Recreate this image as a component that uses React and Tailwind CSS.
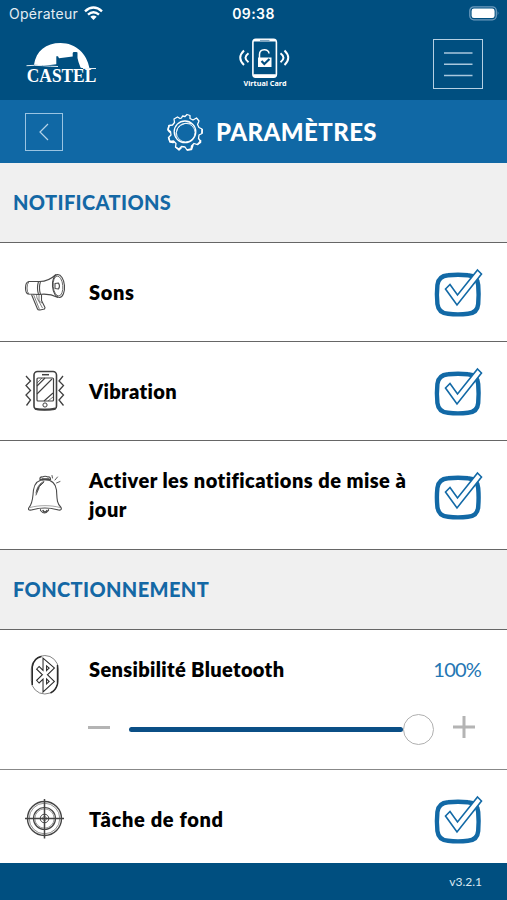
import { useState } from "react";

/* ---------- Icons ---------- */

function CastelLogo() {
  return (
    <svg width="74" height="50" viewBox="0 0 74 50" fill="white" className="overflow-visible">
      <path d="M8 22.800C10 9 20 1 34.500 1C50 1 61 12 63.500 26.300C60 26.500 57 26.500 54.500 25.500L52.500 20L51.500 16V10.500L50.500 10H47.500L46.700 11V14.500L33 16.300L32 14.300H30.300V22.300C23 23.500 16 23.500 8 22.800Z" />
      <path d="M0.500 23.700C11 22.500 22 24.500 32 24.500" stroke="white" strokeWidth="0.900" fill="none" />
      <path d="M57 26.500H70" stroke="white" strokeWidth="0.900" />
      <text
        x="0.800"
        y="40"
        textLength="69.500"
        lengthAdjust="spacingAndGlyphs"
        fontFamily="'Liberation Serif', serif"
        fontWeight="700"
        fontSize="18"
      >
        CASTEL
      </text>
    </svg>
  );
}

function CardLogo() {
  return (
    <svg width="54" height="52" viewBox="0 0 54 52" fill="none" stroke="white">
      <rect x="15.900" y="1.300" width="23.500" height="38" rx="3" strokeWidth="1.600" />
      <path d="M17 2.500H38.500" strokeWidth="2" />
      <path d="M23 2.600H32.500" stroke="#7da5c1" strokeWidth="1.400" />
      <path d="M16.500 37.700H38.800" strokeWidth="3" />
      <path d="M22.500 20V16.500C22.500 10.300 32 10.300 32 15.500" strokeWidth="1.500" />
      <rect x="21" y="19.500" width="13.500" height="9.500" fill="white" stroke="none" />
      <path d="M24.500 23L27.300 26L32.500 21" stroke="#004f80" strokeWidth="2.200" />
      <path d="M7 12.500Q-0.500 19.800 7 27M11.500 15.300Q5.500 19.800 11.500 24.300" strokeWidth="2" />
      <path d="M47.500 12.500Q55 19.800 47.500 27M43.500 15.300Q49.500 19.800 43.500 24.300" strokeWidth="2" />
      <text
        x="6.500"
        y="48"
        textLength="43"
        lengthAdjust="spacingAndGlyphs"
        fill="white"
        stroke="none"
        fontFamily="'Noto Sans', sans-serif"
        fontWeight="700"
        fontSize="7"
      >
        Virtual Card
      </text>
    </svg>
  );
}

function WifiIcon() {
  return (
    <svg width="19" height="15" viewBox="0 0 19 15" fill="none" stroke="white" strokeWidth="2.400">
      <path d="M1 5.300Q9.500 -2.300 18 5.300" />
      <path d="M4 8.700Q9.500 3.700 15 8.700" />
      <path d="M6.300 10.800Q9.500 8.300 12.700 10.800L9.500 14Z" fill="white" stroke="none" />
    </svg>
  );
}

function BatteryIcon() {
  return (
    <svg width="31" height="15" viewBox="0 0 31 15">
      <rect x="0.800" y="0.800" width="26.500" height="13" rx="4" fill="none" stroke="#6d9bbd" strokeWidth="1.300" />
      <rect x="2.600" y="2.600" width="23" height="9.400" rx="2.300" fill="white" />
      <path d="M28.700 5V9.500Q30.500 7.300 28.700 5Z" fill="#6d9bbd" />
    </svg>
  );
}

function GearIcon() {
  return (
    <svg width="36" height="38" viewBox="0 0 36 38" fill="none" stroke="white" strokeWidth="1.300" strokeLinejoin="round">
      <path d="M14.500 5L15.500 3L18 3.500L20 1.500L23 2.500L23 5.500L26 7L29.500 5L32 8L30.500 11.500L32 14.500L35 16L35 20.500L32 22L31.500 25.500L33.500 28L30.500 31.500L27 30.500L24.500 33L24 36L20 37L18 34L14.500 33.500L12 36L8.500 34L9 30.500L6.500 28L3 28.500L1.500 24.500L4 22L3.500 18.500L1 16.500L2 12.500L5.500 12L7.500 9.500L7 6L10.500 4L13 5.500Z" />
      <path d="M2 12.500L1 17L3 19.500M1.500 24.500L3 29L6 29.500L7.500 29M8.500 34L12 37L14.500 34.500M20 37L24.500 36.500L26 32M30.500 31.500L33.500 29.500V27M35 20.500L35.300 16" strokeWidth="1.500" />
      <circle cx="18" cy="18.800" r="10.800" strokeWidth="1.300" />
      <circle cx="18.700" cy="19.600" r="9.300" strokeWidth="0.800" />
      <path d="M9 25Q8 13 18 10.500Q25 9 28 14" strokeWidth="0.900" />
    </svg>
  );
}

function MegaphoneIcon() {
  return (
    <svg width="42" height="40" viewBox="0 0 42 40" fill="none" stroke="#4a4a4a" strokeWidth="1.100" strokeLinejoin="round">
      <path d="M15 9.500H5Q1.500 10 1.500 16Q1.500 21 4 22L15 22.500" />
      <path d="M5 9.500Q3 12 3 16T5 22.300" strokeWidth="0.800" />
      <path d="M14.500 9.500Q12.500 16 14.500 22.500M16.500 9.300Q14.500 16 16.500 22.500" />
      <path d="M14.500 9.500Q24 10 32 2.500M15 22.500Q25 21 34 25.500" />
      <ellipse cx="34.500" cy="14" rx="6" ry="11.600" transform="rotate(-5 34.500 14)" />
      <ellipse cx="34" cy="14" rx="4.800" ry="10" transform="rotate(-5 34 14)" strokeWidth="0.800" />
      <path d="M31 11.500L34.500 11Q36.500 14 34.500 17L31 16.500Z" />
      <path d="M7.500 22.500L13.500 37Q14 38.300 16 38L20.500 37L21 35.500L17.500 28.500V23" />
      <path d="M9.500 22.500L15.500 37.500M12.500 22.500L13 26L18.500 36M15 23V29L18 31" strokeWidth="0.700" />
    </svg>
  );
}

function VibrationIcon() {
  return (
    <svg width="42" height="42" viewBox="0 0 42 42" fill="none" stroke="#404040">
      <rect x="10" y="1.500" width="22.500" height="38" rx="3.500" strokeWidth="1.600" />
      <path d="M11 38.800Q21 41 31.500 38.500" strokeWidth="2" />
      <rect x="13" y="8" width="16.500" height="23" rx="1" strokeWidth="1.200" />
      <path d="M18 4.700H25" strokeWidth="1.500" />
      <circle cx="21" cy="35" r="2.100" strokeWidth="1" />
      <path d="M13 16L21 8M13 24L28 9M20 31L29 23" strokeWidth="1.100" />
      <path d="M13 13L18 8M24 31L29 27" strokeWidth="0.700" />
      <path d="M2 6L6.500 11L2 15.500L6.500 20.500L2 25L6.500 30L2.500 35.500" strokeWidth="1.300" />
      <path d="M39 6L35 11L39.500 15.500L35 20.500L39.500 25L35 30L39.500 35.500" strokeWidth="1.300" />
    </svg>
  );
}

function BellIcon() {
  return (
    <svg width="42" height="42" viewBox="0 0 42 42" fill="none" stroke="#4a4a4a" strokeWidth="1.100" strokeLinecap="round">
      <path d="M5 33.500C9 29 8.500 24 9.500 16C10.500 9 15 5.500 21 5.500C27.500 5.500 32 10 32.500 16C33 24 32.500 29 37 33.500C38 35.500 36.500 36.500 34.500 36C25.500 33.500 16 33.500 7.500 36C4.500 36.500 3.800 35.500 5 33.500Z" />
      <path d="M6 33.500C15 31 27 31 36 33.500" strokeWidth="0.500" />
      <path d="M16 5.500Q15.500 2.700 18.500 3Q21 1.500 24 3Q26.500 2.500 26.500 5.500Z" strokeWidth="1.200" />
      <path d="M18 4.500H25M18 6H25" strokeWidth="0.800" />
      <path d="M16.500 35.500V36.500Q20.500 41.500 24.500 36.500V35.500" />
      <path d="M19 36.500Q21 39.500 23 36.500" strokeWidth="1.500" />
      <path d="M12 19Q13 11 19.500 7.500M13 17Q14 12 19 9M14 15L17 9.500M12 21L15 14M16 12L20 8" strokeWidth="0.900" />
      <path d="M28.500 4L28 1.500M31 6L33.500 3M32.500 9L36 7.500" strokeWidth="0.900" />
    </svg>
  );
}

function BluetoothIcon() {
  return (
    <svg width="42" height="42" viewBox="0 0 42 42" fill="none" stroke="#2a2a2a">
      <rect x="7.300" y="1.500" width="27" height="38.500" rx="13.500" stroke="#777" strokeWidth="0.900" />
      <path d="M8.300 31V13Q9.500 4 17.500 2.500M33.500 11V30Q31.500 37 26.500 39" strokeWidth="1.400" />
      {/* Hollow rune: dark stroke with a thinner white one on top */}
      <path d="M13.500 13.500L27.800 27.500L20.800 34V8L27.800 14L13.500 28" strokeWidth="4.600" />
      <path d="M14.200 14.200L27.800 27.500L20.800 34V8L27.800 14L14.200 27.300" stroke="white" strokeWidth="2.500" />
    </svg>
  );
}

function TargetIcon() {
  return (
    <svg width="42" height="42" viewBox="0 0 42 42" fill="none" stroke="#444" strokeWidth="1">
      <circle cx="20.500" cy="20.500" r="17" strokeWidth="1.400" />
      <circle cx="20.500" cy="20.500" r="15.300" strokeWidth="0.600" />
      <circle cx="20.500" cy="20.500" r="11" strokeWidth="1.200" />
      <circle cx="20.500" cy="20.500" r="9.600" strokeWidth="0.500" />
      <circle cx="20.500" cy="20.500" r="4.300" />
      <circle cx="20.500" cy="20.500" r="2" strokeWidth="0.700" />
      <path d="M20.500 1V40.500M1 20.500H40" strokeWidth="1.500" />
    </svg>
  );
}

/* ---------- Building blocks ---------- */

function CheckBox({ checked, onChange }) {
  return (
    <button onClick={() => onChange(!checked)} className="shrink-0">
      <svg width="54" height="54" viewBox="0 0 54 54" fill="none" stroke="#1269a6">
        <path
          d="M18 10.300Q28 9.300 38 10.300Q47.500 11 48.200 20Q49 29.500 48.200 39Q47.500 48 38 48.800Q28 49.900 18 48.800Q8.500 48 7.400 39Q6.400 29.500 7.400 20Q8.500 11 18 10.300Z"
          strokeWidth="4.400"
        />
        {checked && (
          <path
            d="M47.500 5L51.500 9L27 40L15.500 24L20 19.500L27.500 30Z"
            fill="white"
            strokeWidth="1.600"
          />
        )}
      </svg>
    </button>
  );
}

function SectionTitle({ children }) {
  return (
    <div className="h-20 bg-[#f0f0f0] border-b border-[#666] flex items-center pl-[13px] pb-0.5">
      <h2 className="text-[20px] tracking-[0.37px] font-black text-[#1468a5]">{children}</h2>
    </div>
  );
}

function SettingRow({ icon, label, checked, onChange, className, labelClass }) {
  return (
    <div className={`flex items-center border-b border-[#666] pl-6 pr-[23px] ${className}`}>
      {icon}
      <p className={`flex-1 ml-[23px] text-[20px] leading-[29px] font-extrabold ${labelClass}`}>
        {label}
      </p>
      <CheckBox checked={checked} onChange={onChange} />
    </div>
  );
}

function App() {
  const [sounds, setSounds] = useState(true);
  const [vibration, setVibration] = useState(true);
  const [updates, setUpdates] = useState(true);
  const [background, setBackground] = useState(true);
  const [level, setLevel] = useState(100);

  return (
    <div className="w-[507px] h-[900px] overflow-hidden flex flex-col bg-white text-black font-['Lato',sans-serif] [font-variant-ligatures:none]">

      {/* Status bar */}
      <div className="h-[27px] shrink-0 bg-[#004f80] text-white grid grid-cols-3 items-center font-['Inter',sans-serif]">
        <div className="flex items-center gap-1.5 pl-[9px]">
          <span className="text-[14px] leading-none tracking-[0.25px] text-[#e4edf3]">Opérateur</span>
          <WifiIcon />
        </div>
        <span className="text-center text-[14px] leading-none font-semibold tracking-[0.4px]">09:38</span>
        <div className="flex justify-end pr-[7px]">
          <BatteryIcon />
        </div>
      </div>

      {/* Header */}
      <header className="h-[73px] shrink-0 bg-[#004f80] flex pl-[26px]">
        <div className="pt-[15px] w-[74px]">
          <CastelLogo />
        </div>
        <div className="pt-[11px] ml-[137px]">
          <CardLogo />
        </div>
        <button className="ml-[142px] mt-3 w-[50px] h-[50px] border border-[#b5d0e3] flex items-center justify-center">
          <svg width="30" height="26" viewBox="0 0 30 26" stroke="#a9c8dd" strokeWidth="1.500">
            <path d="M1 2H29.500M1 13.200H29.500M1 24.500H29.500" />
          </svg>
        </button>
      </header>

      {/* Page title */}
      <div className="h-[63px] shrink-0 bg-[#1068a5] flex items-center pl-[25px]">
        <button className="w-[38px] h-[38px] border border-[#9ac4e2] flex items-center justify-center">
          <svg width="12" height="18" viewBox="0 0 12 18" fill="none" stroke="#b5d3e8" strokeWidth="1.200">
            <path d="M10 1L2 9L10 17" />
          </svg>
        </button>
        <div className="ml-[104px]">
          <GearIcon />
        </div>
        <h1 className="ml-[13px] text-[24px] leading-none tracking-[0.42px] font-black text-white">PARAMÈTRES</h1>
      </div>

      <main className="flex-1 min-h-0 overflow-hidden">

        {/* Notifications */}
        <SectionTitle>NOTIFICATIONS</SectionTitle>
        <SettingRow
          icon={<MegaphoneIcon />}
          label="Sons"
          checked={sounds}
          onChange={setSounds}
          className="h-[99px]"
          labelClass="tracking-[0.6px]"
        />
        <SettingRow
          icon={<VibrationIcon />}
          label="Vibration"
          checked={vibration}
          onChange={setVibration}
          className="h-[99px]"
          labelClass="tracking-[0.35px]"
        />
        <SettingRow
          icon={<BellIcon />}
          label="Activer les notifications de mise à jour"
          checked={updates}
          onChange={setUpdates}
          className="h-[109px]"
          labelClass="tracking-[0.46px]"
        />

        {/* Operation */}
        <SectionTitle>FONCTIONNEMENT</SectionTitle>
        <div className="h-[140px] border-b border-[#888] pl-6 pr-[26px] pt-6">
          <div className="flex items-start">
            <BluetoothIcon />
            <p className="flex-1 ml-[23px] mt-px text-[20px] leading-[29px] tracking-[0.35px] font-extrabold">
              Sensibilité Bluetooth
            </p>
            <span className="mt-px text-[20px] leading-[29px] tracking-[-0.8px] text-[#2476b4]">{level}%</span>
          </div>
          <div className="flex items-center h-[30px] mt-[18px] pl-16">
            <button onClick={() => setLevel(Math.max(0, level - 10))} className="w-[22px] h-[22px] -mt-1 flex items-center">
              <span className="w-full h-[3px] bg-[#b4b4b4]" />
            </button>
            <div className="ml-[19px] w-[305px] flex items-center">
              <div className="flex-1 flex items-center">
                <div className="h-[5px] rounded-full bg-[#0b4f86]" style={{ width: `${level}%` }} />
                <div className="w-[31px] h-[31px] -mr-[31px] shrink-0 rounded-full bg-white border border-[#b0b0b0]" />
              </div>
              <div className="w-[31px]" />
            </div>
            <button onClick={() => setLevel(Math.min(100, level + 10))} className="ml-[19px] -mt-1">
              <svg width="22" height="22" viewBox="0 0 22 22" stroke="#b4b4b4" strokeWidth="3">
                <path d="M11 0V22M0 11H22" />
              </svg>
            </button>
          </div>
        </div>
        <SettingRow
          icon={<TargetIcon />}
          label="Tâche de fond"
          checked={background}
          onChange={setBackground}
          className="h-[99px]"
          labelClass="tracking-[0.65px]"
        />
      </main>

      {/* Footer */}
      <footer className="h-[37px] shrink-0 bg-[#004f80] flex items-center justify-end pr-[25px]">
        <span className="text-[12px] text-[#dbe7ef]">v3.2.1</span>
      </footer>
    </div>
  );
}

export default App;
